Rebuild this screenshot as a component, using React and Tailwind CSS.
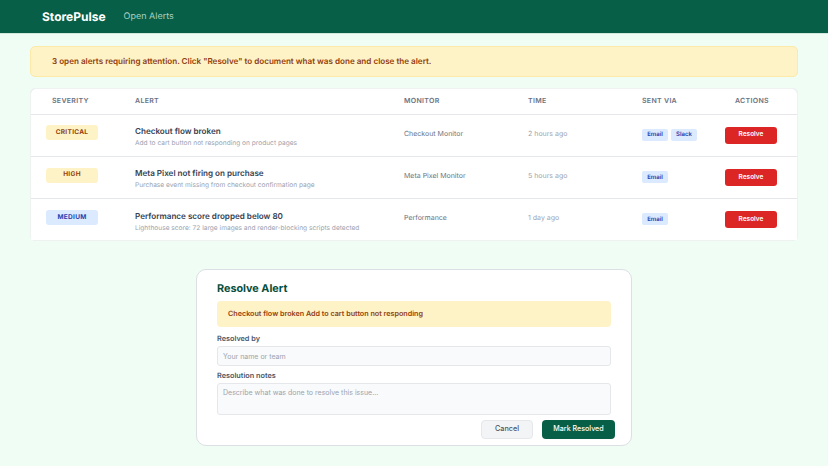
const rows = [
  { sev: "CRITICAL", sevCls: "bg-[#fef3c7] text-[#92400e]", title: "Checkout flow broken", sub: "Add to cart button not responding on product pages", mon: "Checkout Monitor", time: "2 hours ago", via: ["Email", "Slack"] },
  { sev: "HIGH", sevCls: "bg-[#fef3c7] text-[#92400e]", title: "Meta Pixel not firing on purchase", sub: "Purchase event missing from checkout confirmation page", mon: "Meta Pixel Monitor", time: "5 hours ago", via: ["Email"] },
  { sev: "MEDIUM", sevCls: "bg-[#dbeafe] text-[#1e40af]", title: "Performance score dropped below 80", sub: "Lighthouse score: 72 large images and render-blocking scripts detected", mon: "Performance", time: "1 day ago", via: ["Email"] },
];

const cols = "grid grid-cols-[104px_269px_124px_114px_78px_79px]";

export default function App() {
  return (
    <div className="w-[828px] h-[466px] overflow-hidden bg-[#f0fdf4] font-['Inter',sans-serif] antialiased [text-rendering:geometricPrecision] flex flex-col">
      <header className="h-[33px] bg-[#065f46] flex items-center pl-[42px] border-b border-[#d1e7dc] box-content shrink-0">
        <span className="text-[12px] font-bold leading-none text-white">StorePulse</span>
        <span className="ml-[18px] text-[9px] leading-none text-[#a7d0c0]">Open Alerts</span>
      </header>

      <main className="flex flex-col px-[30px] pt-[12px]">
        <div className="h-[31px] rounded-[5px] bg-[#fef3c7] border border-[#fde9a8] flex items-center pl-[21px] text-[8.1px] font-semibold text-[#92400e]">
          3 open alerts requiring attention. Click "Resolve" to document what was done and close the alert.
        </div>

        <div className="mt-[11px] flex flex-col gap-[1.3px] bg-[#e5e7eb] rounded-[5px] border border-[#eef2f0]">
          <div className={`${cols} h-[24.5px] items-center bg-white rounded-t-[5px] text-[7px] font-semibold tracking-[0.3px] text-[#6b7280]`}>
            <span className="pl-[21px]">SEVERITY</span>
            <span>ALERT</span>
            <span>MONITOR</span>
            <span>TIME</span>
            <span>SENT VIA</span>
            <span className="pl-[15px]">ACTIONS</span>
          </div>
          {rows.map((r) => (
            <div key={r.sev} className={`${cols} h-[41px] items-center bg-white`}>
              <div className="pl-[15px] -mt-[5px]">
                <span className={`flex items-center justify-center w-[52px] h-[15px] rounded-[3px] text-[6.5px] font-bold tracking-[0.3px] ${r.sevCls}`}>{r.sev}</span>
              </div>
              <div className="flex flex-col gap-[1px] mt-[2.5px]">
                <span className="text-[8.1px] leading-[12px] font-semibold text-[#374151]">{r.title}</span>
                <span className="text-[6.6px] leading-[10px] text-[#9ca3af]">{r.sub}</span>
              </div>
              <span className="text-[7px] text-[#6b7280] -mt-[3px]">{r.mon}</span>
              <span className="text-[7px] text-[#9ca3af] -mt-[3px]">{r.time}</span>
              <div className="flex gap-[3px] -mt-[1px]">
                {r.via.map((v) => (
                  <span key={v} className="flex items-center justify-center w-[26px] h-[12px] rounded-[2px] bg-[#dbeafe] text-[#1e40af] text-[6px] font-semibold">{v}</span>
                ))}
              </div>
              <button className="ml-[5px] w-[52px] h-[17px] rounded-[3px] bg-[#dc2626] text-white text-[6.5px] font-semibold">Resolve</button>
            </div>
          ))}
        </div>

        <section className="self-center mt-[27.6px] w-[436px] h-[177px] box-border bg-white rounded-[10px] border-[1.5px] border-[#dcdfe3] pl-[20px] pr-[16px] pt-[11px] flex flex-col">
          <h2 className="text-[10.8px] leading-[16px] font-bold text-[#064e3b]">Resolve Alert</h2>
          <div className="mt-[4px] mr-[4px] h-[26px] rounded-[4px] bg-[#fef3c7] flex items-center pl-[11px] text-[7.2px] font-semibold text-[#92400e]">
            Checkout flow broken Add to cart button not responding
          </div>
          <label className="mt-[7.5px] text-[7.3px] leading-[10px] font-semibold text-[#4b5563]">Resolved by</label>
          <input readOnly placeholder="Your name or team" className="mt-[2px] mr-[4px] h-[20px] rounded-[3px] bg-[#f9fafb] border border-[#e5e7eb] pl-[5px] text-[7px] placeholder:text-[#9ca3af] outline-none" />
          <label className="mt-[4.5px] text-[7.3px] leading-[10px] font-semibold text-[#4b5563]">Resolution notes</label>
          <textarea readOnly placeholder="Describe what was done to resolve this issue..." className="mt-[2px] mr-[4px] h-[32px] rounded-[3px] bg-[#f9fafb] border border-[#e5e7eb] pl-[5px] pt-[3px] text-[7px] leading-[12px] resize-none placeholder:text-[#9ca3af] outline-none" />
          <div className="mt-[5px] flex justify-end gap-[9px]">
            <button className="w-[52px] h-[19px] rounded-[4px] bg-[#f3f4f6] border border-[#e5e7eb] text-[7.25px] font-medium text-[#4b5563]">Cancel</button>
            <button className="w-[73px] h-[19px] rounded-[4px] bg-[#065f46] text-white text-[7.1px] font-medium">Mark Resolved</button>
          </div>
        </section>
      </main>
    </div>
  );
}
